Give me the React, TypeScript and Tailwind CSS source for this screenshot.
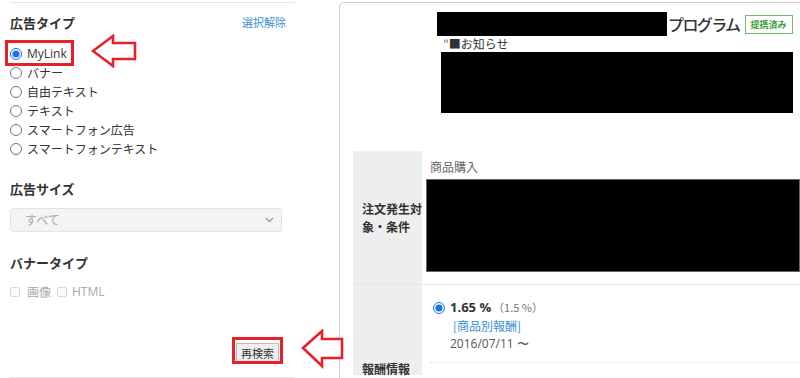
import React from "react"

const font = "font-['Noto_Sans_CJK_JP','Noto_Sans',sans-serif]"

const types = ["MyLink", "バナー", "自由テキスト", "テキスト", "スマートフォン広告", "スマートフォンテキスト"]

function LeftArrow({ w, h, d }: { w: number; h: number; d: string }) {
  return (
    <svg width={w} height={h} viewBox={`0 0 ${w} ${h}`}>
      <path d={d} fill="white" stroke="#e8202a" strokeWidth="2.6" strokeLinejoin="miter" />
    </svg>
  )
}

export default function App() {
  return (
    <div className={`relative w-[800px] h-[378px] overflow-hidden bg-white flex text-[#333] ${font}`}>
      {/* Search filters */}
      <div className="w-[285px] shrink-0 ml-[10px] mt-[2px] border-t border-[#e6e6e6] flex flex-col">
        <div className="flex items-center justify-between pr-[9px] mt-[12px] h-[16px]">
          <h3 className="text-[13px] font-bold leading-none">広告タイプ</h3>
          <a className="text-[11px] text-[#3b8fd1] leading-none">選択解除</a>
        </div>
        <div className="mt-[15px] flex flex-col">
          {types.map((t, i) => (
            <label key={t} className="flex items-center h-[19px] text-[12px] leading-none">
              <input
                type="radio"
                name="type"
                defaultChecked={i === 0}
                className="m-0 w-[12px] h-[12px] accent-[#1a73e8]"
              />
              <span className={`ml-[5px] ${i === 0 ? "font-['Open_Sans',sans-serif]" : ""}`}>{t}</span>
            </label>
          ))}
        </div>

        <h3 className="text-[13px] font-bold leading-none mt-[23px]">広告サイズ</h3>
        <div className="mt-[13px] w-[272px] h-[26px] rounded-[3px] border border-[#e2e2e2] bg-[#f4f4f4] flex items-center justify-between px-[14px] pr-[7px]">
          <span className="text-[12px] text-[#a8a8a8] leading-none">すべて</span>
          <svg width="9" height="6" viewBox="0 0 9 6">
            <path d="M1 1l3.5 3.5L8 1" fill="none" stroke="#999" strokeWidth="1.3" />
          </svg>
        </div>

        <h3 className="text-[13px] font-bold leading-none mt-[24px]">バナータイプ</h3>
        <div className="mt-[17px] flex items-center text-[12px] text-[#aaa] leading-none">
          <span className="w-[10px] h-[10px] border border-[#d8d8d8] rounded-[2px] bg-[#fafafa]" />
          <span className="ml-[7px]">画像</span>
          <span className="ml-[6px] w-[10px] h-[10px] border border-[#d8d8d8] rounded-[2px] bg-[#fafafa]" />
          <span className="ml-[5px] font-['Open_Sans',sans-serif]">HTML</span>
        </div>

        <div className="flex justify-end pr-[16px] mt-[45px]">
          <button className="w-[43px] h-[20px] bg-[#eeeeee] border border-[#bbb] text-[11px] leading-none text-[#333]">
            再検索
          </button>
        </div>
        <div className="mt-[14px] border-t border-[#e6e6e6]" />
      </div>

      {/* Program details */}
      <div className="ml-[44px] mt-[2px] flex-1 border-l border-t border-[#cfcfcf] rounded-tl-[5px] flex flex-col">
        <div className="ml-[97px] mt-[9px] flex items-center whitespace-nowrap">
          <div className="w-[230px] h-[24px] shrink-0 bg-black" />
          <span className="shrink-0 ml-[1px] text-[16px] font-medium leading-none tracking-[-1.6px] text-[#333]">プログラム</span>
          <span className="shrink-0 ml-[5px] h-[19px] px-[5px] border border-[#6cc06c] text-[#3aa03a] text-[9px] font-bold flex items-center leading-none">
            提携済み
          </span>
        </div>
        <div className="ml-[103px] mt-[1px] text-[12px] leading-[14px]">
          <span className="text-[#4a8ac0]">"</span>■お知らせ
        </div>
        <div className="ml-[101px] mt-[1px] w-[352px] h-[61px] bg-black" />

        <div className="ml-[13px] mt-[38px] flex flex-col">
          <div className="flex">
            <div className="w-[69px] bg-[#eeeeee] flex items-center pl-[9px] text-[12px] font-bold leading-[18px]">
              注文発生対象・条件
            </div>
            <div className="flex-1 pl-[4px] pb-[12px]">
              <div className="pl-[4px] mt-[10px] text-[12px] leading-none text-[#666]">商品購入</div>
              <div className="mt-[6px] h-[93px] bg-black border border-[#666]" />
            </div>
          </div>
          <div className="flex border-t border-[#e6e6e6]">
            <div className="w-[69px] bg-[#eeeeee] pl-[9px] pt-[78px] text-[12px] font-bold leading-none">報酬情報</div>
            <div className="flex-1 pl-[8px]">
              <div className="ml-[3px] mt-[16px] flex items-center leading-none">
                <input type="radio" defaultChecked className="m-0 w-[12px] h-[12px] accent-[#1a73e8]" />
                <span className="ml-[5px] text-[13px] font-bold font-['Open_Sans',sans-serif]">1.65 %</span>
                <span className="ml-[2px] text-[11px] text-[#777]">（1.5 %）</span>
              </div>
              <div className="ml-[23px] mt-[6px] text-[12px] leading-none text-[#3b8fd1]">[商品別報酬]</div>
              <div className="ml-[20px] mt-[6px] text-[12px] leading-none text-[#555] font-['Open_Sans',sans-serif]">
                2016/07/11 〜
              </div>
              <div className="mt-[12px] border-t border-dotted border-[#ddd]" />
            </div>
          </div>
        </div>
      </div>

      {/* Annotations */}
      <div className="absolute left-[5px] top-[40px] w-[69px] h-[26px] border-[3px] border-[#e8202a]" />
      <div className="absolute left-[91px] top-[34px]">
        <LeftArrow w={47} h={34} d="M2 17L22 2V9H44V25H22V32Z" />
      </div>
      <div className="absolute left-[232px] top-[337px] w-[51px] h-[27px] border-[3px] border-[#e8202a]" />
      <div className="absolute left-[301px] top-[329px]">
        <LeftArrow w={44} h={40} d="M2 19L21 2V10H41V29H21V37Z" />
      </div>
    </div>
  )
}
